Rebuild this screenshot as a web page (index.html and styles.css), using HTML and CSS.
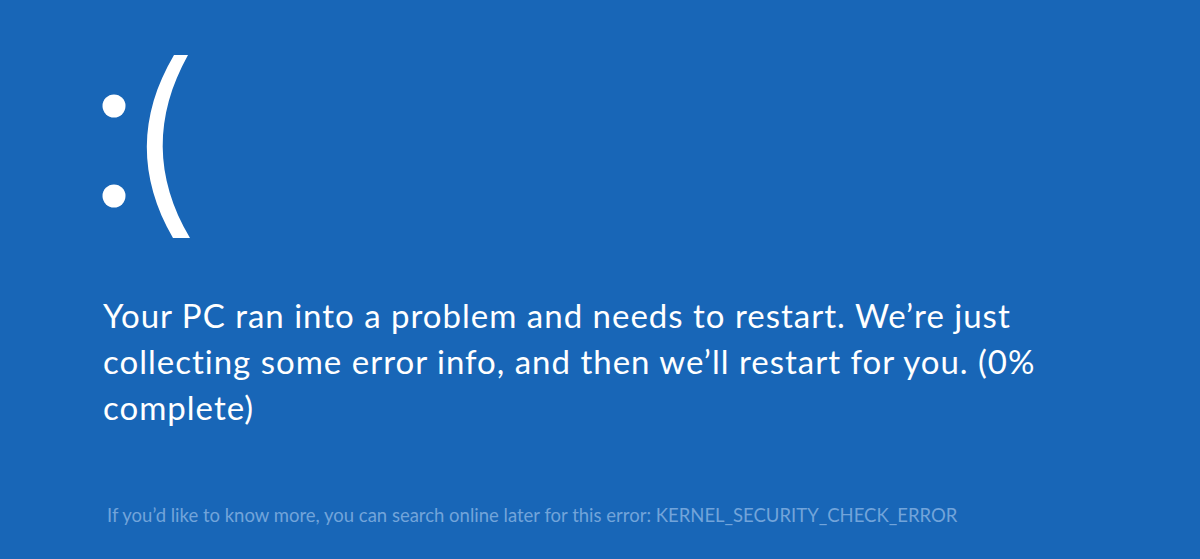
FILE: index.html
```html
<!DOCTYPE html>
<html lang="en">
<head>
<meta charset="utf-8">
<title>Your PC ran into a problem</title>
<link rel="stylesheet" href="styles.css">
</head>
<body>
<main class="screen">
  <svg class="sad-face" width="100" height="185" viewBox="100 55 100 185" aria-label=":(">
    <circle cx="114" cy="106" r="11.5" fill="#fff"/>
    <circle cx="114" cy="196" r="11.5" fill="#fff"/>
    <path d="M174 55 C138 116 138 177 173 238 L190 238 C154 177 154 116 188 55 Z" fill="#fff"/>
  </svg>
  <p class="message">Your PC ran into a problem and needs to restart. We’re just collecting some error info, and then we’ll restart for you. (0% complete)</p>
  <p class="more">If you’d like to know more, you can search online later for this error: KERNEL_SECURITY_CHECK_ERROR</p>
</main>
</body>
</html>
```
FILE: styles.css
```css
html, body {
  margin: 0;
  padding: 0;
  background: #1866b7;
  height: 100%;
  overflow: hidden;
}

.screen {
  display: flex;
  flex-direction: column;
  align-items: flex-start;
  padding: 55px 0 0 100px;
  color: #fff;
  font-family: Lato, "Open Sans", "Liberation Sans", sans-serif;
}

.sad-face {
  display: block;
}

.message {
  margin: 52px 0 0 3px;
  width: 960px;
  font-size: 33px;
  line-height: 46px;
  letter-spacing: 1px;
  font-weight: 400;
}

.more {
  margin: 74px 0 0 7px;
  font-size: 18.5px;
  line-height: 22px;
  color: #72a4da;
}
```
